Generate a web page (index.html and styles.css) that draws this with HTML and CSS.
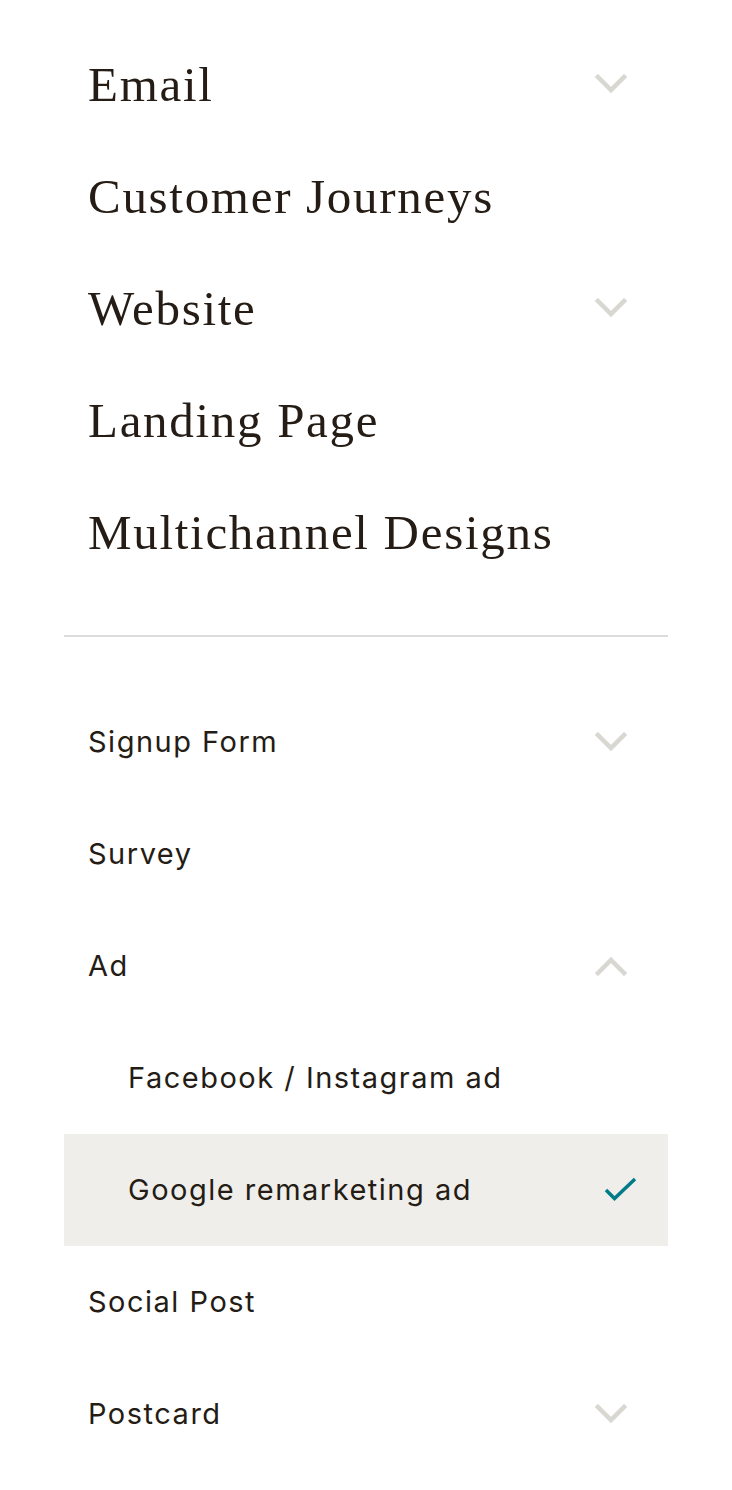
FILE: index.html
```html
<!DOCTYPE html>
<html lang="en">
<head>
<meta charset="utf-8">
<title>Menu</title>
<link rel="stylesheet" href="styles.css">
</head>
<body>
<nav class="menu">
  <ul class="primary">
    <li class="row"><span class="serif">Email</span><svg class="chev" viewBox="0 0 32 20"><polyline points="3,3 16,16 29,3"/></svg></li>
    <li class="row"><span class="serif">Customer Journeys</span></li>
    <li class="row"><span class="serif">Website</span><svg class="chev" viewBox="0 0 32 20"><polyline points="3,3 16,16 29,3"/></svg></li>
    <li class="row"><span class="serif">Landing Page</span></li>
    <li class="row"><span class="serif">Multichannel Designs</span></li>
  </ul>
  <ul class="secondary">
    <li class="row"><span class="sans">Signup Form</span><svg class="chev" viewBox="0 0 32 20"><polyline points="3,3 16,16 29,3"/></svg></li>
    <li class="row"><span class="sans">Survey</span></li>
    <li class="row"><span class="sans">Ad</span><svg class="chev up" viewBox="0 0 32 20"><polyline points="3,17 16,4 29,17"/></svg></li>
    <li class="row sub"><span class="sans">Facebook / Instagram ad</span></li>
    <li class="row sub selected"><span class="sans">Google remarketing ad</span><svg class="check" viewBox="0 0 34 26"><polyline points="2,13 10.5,21.5 31,2"/></svg></li>
    <li class="row"><span class="sans">Social Post</span></li>
    <li class="row"><span class="sans">Postcard</span><svg class="chev" viewBox="0 0 32 20"><polyline points="3,3 16,16 29,3"/></svg></li>
  </ul>
</nav>
</body>
</html>
```
FILE: styles.css
```css
* { box-sizing: border-box; }
html, body { margin: 0; padding: 0; background: #ffffff; }
body { color: #241c15; }
.menu { margin: 28px 64px 20px; width: 604px; }
ul { list-style: none; margin: 0; padding: 0; }
.primary { padding-bottom: 47px; border-bottom: 2px solid #dcdcdc; }
.secondary { padding-top: 49px; }
.row {
  height: 112px;
  display: flex;
  align-items: center;
  justify-content: space-between;
  padding: 0 41px 0 24px;
}
.row.sub { padding-left: 64px; }
.row.selected { background: #efeeea; padding-right: 30px; }
.serif {
  font-family: "Liberation Serif", "Times New Roman", serif;
  font-size: 49px;
  letter-spacing: 1.7px;
  line-height: 1;
}
.sans {
  font-family: Inter, "Liberation Sans", Arial, sans-serif;
  font-size: 29px;
  letter-spacing: 1.5px;
  line-height: 1;
  padding-bottom: 2px;
}
.chev { width: 32px; height: 20px; fill: none; stroke: #d9d7d1; stroke-width: 4.5; stroke-linecap: square; }
.check { width: 34px; height: 26px; fill: none; stroke: #007c89; stroke-width: 3.5; }
```
